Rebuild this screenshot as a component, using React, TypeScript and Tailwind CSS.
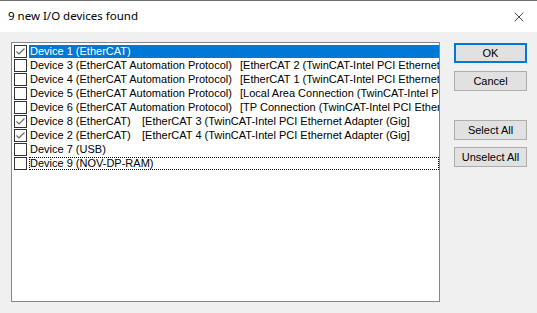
import { X } from 'lucide-react'

interface Row {
  name: string
  info: string
  col: number
  checked: boolean
}

const rows: Row[] = [
  { name: 'Device 1 (EtherCAT)', info: '', col: 0, checked: true },
  { name: 'Device 3 (EtherCAT Automation Protocol)', info: '[EtherCAT 2 (TwinCAT-Intel PCI Ethernet Adapter (Gigabit) #2)]', col: 240, checked: false },
  { name: 'Device 4 (EtherCAT Automation Protocol)', info: '[EtherCAT 1 (TwinCAT-Intel PCI Ethernet Adapter (Gigabit))]', col: 240, checked: false },
  { name: 'Device 5 (EtherCAT Automation Protocol)', info: '[Local Area Connection (TwinCAT-Intel PCI Ethernet Adapter)]', col: 240, checked: false },
  { name: 'Device 6 (EtherCAT Automation Protocol)', info: '[TP Connection (TwinCAT-Intel PCI Ethernet Adapter)]', col: 240, checked: false },
  { name: 'Device 8 (EtherCAT)', info: '[EtherCAT 3 (TwinCAT-Intel PCI Ethernet Adapter (Gig]', col: 142, checked: true },
  { name: 'Device 2 (EtherCAT)', info: '[EtherCAT 4 (TwinCAT-Intel PCI Ethernet Adapter (Gig]', col: 142, checked: true },
  { name: 'Device 7 (USB)', info: '', col: 0, checked: false },
  { name: 'Device 9 (NOV-DP-RAM)', info: '', col: 0, checked: false },
]

function Check({ checked }: { checked: boolean }) {
  return (
    <div className="w-[13px] h-[13px] border border-[#333333] bg-white shrink-0 flex items-center justify-center">
      {checked && (
        <svg width="11" height="11" viewBox="0 0 11 11">
          <path d="M1.5 5.5 L4 8 L9.5 2.5" stroke="#666666" strokeWidth="1.2" fill="none" />
        </svg>
      )}
    </div>
  )
}

function Btn({ label, primary }: { label: string; primary?: boolean }) {
  return (
    <button
      className={`w-[73px] h-[20px] bg-[#e1e1e1] text-[11px] leading-[13px] text-black flex items-center justify-center ${primary ? 'border-2 border-[#0078d7]' : 'border border-[#adadad]'}`}
    >
      {label}
    </button>
  )
}

export default function App() {
  return (
    <div className="w-[537px] h-[313px] bg-[#f0f0f0] overflow-hidden" style={{ fontFamily: '"Liberation Sans", Arial, sans-serif' }}>
      <div className="h-px bg-[#707070]" />
      <div className="h-[31px] bg-white flex items-center justify-between pl-2 pr-[10px]">
        <span className="text-[11.5px] text-black pb-[1px]" style={{ fontFamily: '"Noto Sans", sans-serif' }}>9 new I/O devices found</span>
        <X size={16} strokeWidth={1.1} className="text-black" />
      </div>
      <div className="flex pt-[10px] pl-[11px]">
        <div className="w-[429px] h-[260px] border border-[#828790] bg-white pt-px overflow-hidden">
          {rows.map((r, i) => {
            const selected = i === 0
            const focused = i === rows.length - 1
            return (
              <div key={i} className="h-[14px] flex items-center pl-[2px]">
                <Check checked={r.checked} />
                <div
                  className={`relative flex-1 h-[13px] ml-[2px] text-[11px] leading-[13px] whitespace-nowrap overflow-hidden ${selected ? 'bg-[#0078d7] text-white' : 'text-black'} ${focused ? 'outline-1 outline-dotted outline-black -outline-offset-1' : ''}`}
                >
                  <span className="pl-px">{r.name}</span>
                  {r.info && (
                    <span className="absolute top-0" style={{ left: r.col - 29 }}>
                      {r.info}
                    </span>
                  )}
                </div>
              </div>
            )
          })}
        </div>
        <div className="flex flex-col ml-[14px] pt-px">
          <Btn label="OK" primary />
          <div className="h-[8px]" />
          <Btn label="Cancel" />
          <div className="h-[29px]" />
          <Btn label="Select All" />
          <div className="h-[7px]" />
          <Btn label="Unselect All" />
        </div>
      </div>
    </div>
  )
}
